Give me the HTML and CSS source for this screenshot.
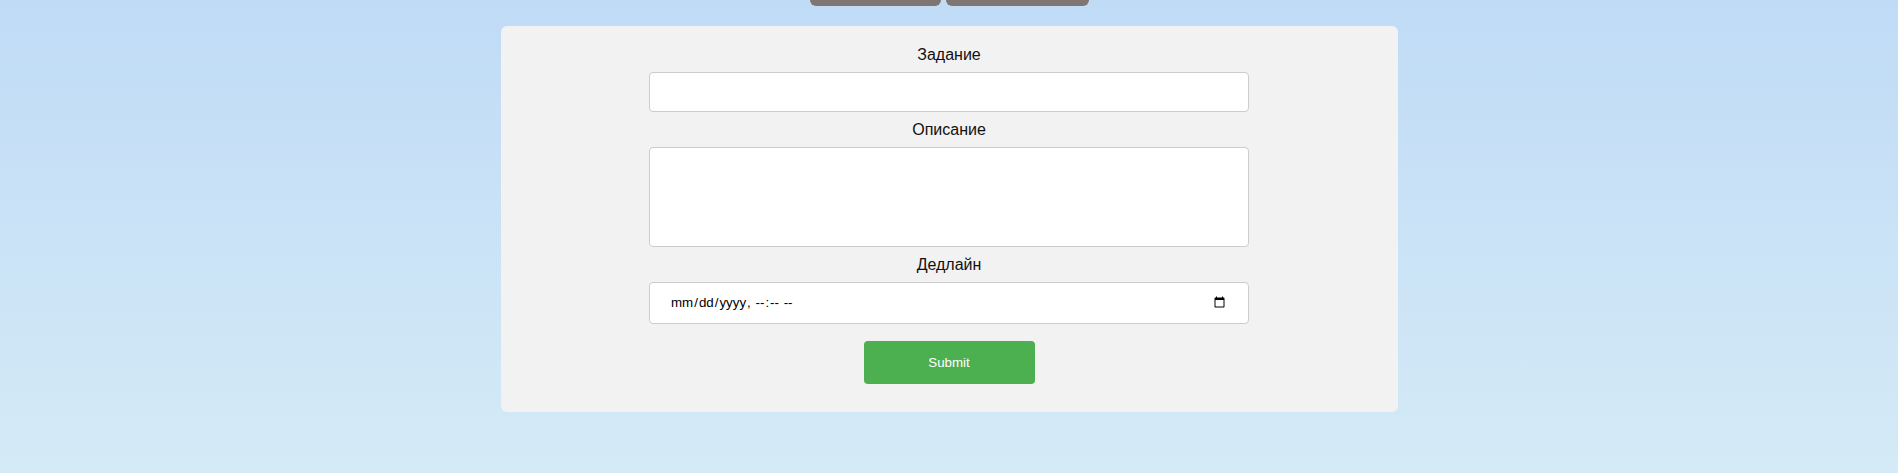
FILE: index.html
```html
<!DOCTYPE html>
<html lang="ru">
<head>
<meta charset="utf-8">
<title>Задачи</title>
<link rel="stylesheet" href="styles.css">
</head>
<body>
  <nav class="nav">
    <button class="nav-btn nav-btn-a" type="button"></button>
    <button class="nav-btn nav-btn-b" type="button"></button>
  </nav>
  <main class="card">
    <form class="task-form">
      <label class="label" for="title">Задание</label>
      <input class="field field-text" id="title" type="text">
      <label class="label" for="desc">Описание</label>
      <textarea class="field field-area" id="desc"></textarea>
      <label class="label" for="deadline">Дедлайн</label>
      <input class="field field-date" id="deadline" type="datetime-local">
      <button class="submit" type="submit">Submit</button>
    </form>
  </main>
</body>
</html>
```

FILE: styles.css
```css
html, body {
  margin: 0;
  padding: 0;
}
body {
  min-height: 473px;
  background: linear-gradient(to bottom, #c0dbf6 0%, #d4eaf6 100%);
  font-family: "Liberation Sans", Arial, sans-serif;
  overflow: hidden;
}
.nav {
  display: flex;
  justify-content: center;
  gap: 5px;
  margin-top: -34px;
}
.nav-btn {
  height: 40px;
  border: none;
  border-radius: 6px;
  background: #7f7573;
  padding: 0;
}
.nav-btn-a { width: 131px; }
.nav-btn-b { width: 143px; }
.card {
  box-sizing: border-box;
  width: 897px;
  margin: 20px auto 0;
  background: #f2f2f2;
  border-radius: 6px;
  padding: 19px 0 28px;
}
.task-form {
  display: flex;
  flex-direction: column;
  align-items: center;
  gap: 8px;
}
.label {
  font-size: 16px;
  line-height: 19px;
  color: #111;
}
.field {
  box-sizing: border-box;
  width: 600px;
  margin: 0;
  background: #fff;
  border: 1px solid #ccc;
  border-radius: 4px;
  padding: 10px 20px;
  font-family: "Liberation Sans", Arial, sans-serif;
  font-size: 13.333px;
  color: #000;
}
.field-text { height: 40px; }
.field-area { height: 100px; resize: none; display: block; }
.field-date { height: 42px; }
.submit {
  width: 171px;
  height: 43px;
  margin-top: 9px;
  border: none;
  border-radius: 4px;
  background: #4caf50;
  color: #fff;
  font-family: "Liberation Sans", Arial, sans-serif;
  font-size: 13.333px;
}
```
